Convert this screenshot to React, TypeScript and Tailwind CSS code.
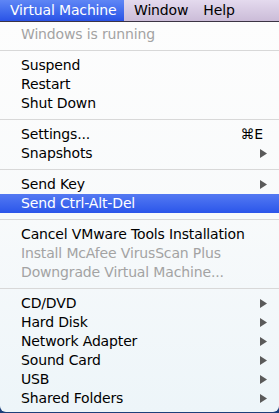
type Item = {
  label: string;
  disabled?: boolean;
  shortcut?: string;
  submenu?: boolean;
  active?: boolean;
};

const groups: Item[][] = [
  [{ label: "Windows is running", disabled: true }],
  [{ label: "Suspend" }, { label: "Restart" }, { label: "Shut Down" }],
  [{ label: "Settings...", shortcut: "⌘E" }, { label: "Snapshots", submenu: true }],
  [{ label: "Send Key", submenu: true }, { label: "Send Ctrl-Alt-Del", active: true }],
  [
    { label: "Cancel VMware Tools Installation" },
    { label: "Install McAfee VirusScan Plus", disabled: true },
    { label: "Downgrade Virtual Machine...", disabled: true },
  ],
  [
    { label: "CD/DVD", submenu: true },
    { label: "Hard Disk", submenu: true },
    { label: "Network Adapter", submenu: true },
    { label: "Sound Card", submenu: true },
    { label: "USB", submenu: true },
    { label: "Shared Folders", submenu: true },
  ],
];

const Arrow = () => (
  <svg width="7" height="9" viewBox="0 0 7 9" className="block">
    <path d="M0 0 L7 4.5 L0 9 Z" fill="#5a5a5a" />
  </svg>
);

const MenuRow = ({ item }: { item: Item }) => (
  <div
    className={`flex h-[19px] items-center pl-[21px] pr-[12px] ${
      item.active
        ? "bg-gradient-to-b from-[#5479f2] to-[#2b55ea] text-white"
        : item.disabled
        ? "text-[#a3a3a3]"
        : "text-black"
    }`}
  >
    <span className="flex-1 whitespace-nowrap">{item.label}</span>
    {item.shortcut && <span className="pr-[4px]">{item.shortcut}</span>}
    {item.submenu && <Arrow />}
  </div>
);

export default function App() {
  return (
    <div
      className="relative h-[413px] w-[279px] overflow-hidden bg-[#1c3f7a] text-[14px] leading-[19px] tracking-[-0.15px]"
      style={{ fontFamily: '"DejaVu Sans", "Liberation Sans", sans-serif' }}
    >
      <div className="flex h-[22px] items-stretch border-b border-[#3c3444] bg-gradient-to-b from-[#e4daee] to-[#cbbcd8]">
        <div className="flex w-[124px] items-center bg-gradient-to-b from-[#5f86f5] to-[#2a52e6] pl-[10px] text-white">
          Virtual Machine
        </div>
        <div className="flex items-center pl-[10px] text-black">Window</div>
        <div className="flex items-center pl-[15px] text-black">Help</div>
      </div>
      <div className="h-[390px] rounded-b-[6px] bg-gradient-to-b from-[#fdfdfd] via-[#f8fafb] to-[#edf5f9] pt-[3px]">
        {groups.map((g, gi) => (
          <div key={gi}>
            {gi > 0 && (
              <div className="flex h-[12px] items-center">
                <div className="h-px w-full bg-[#d8d8d8]" />
              </div>
            )}
            {g.map((item) => (
              <MenuRow key={item.label} item={item} />
            ))}
          </div>
        ))}
      </div>
    </div>
  );
}
